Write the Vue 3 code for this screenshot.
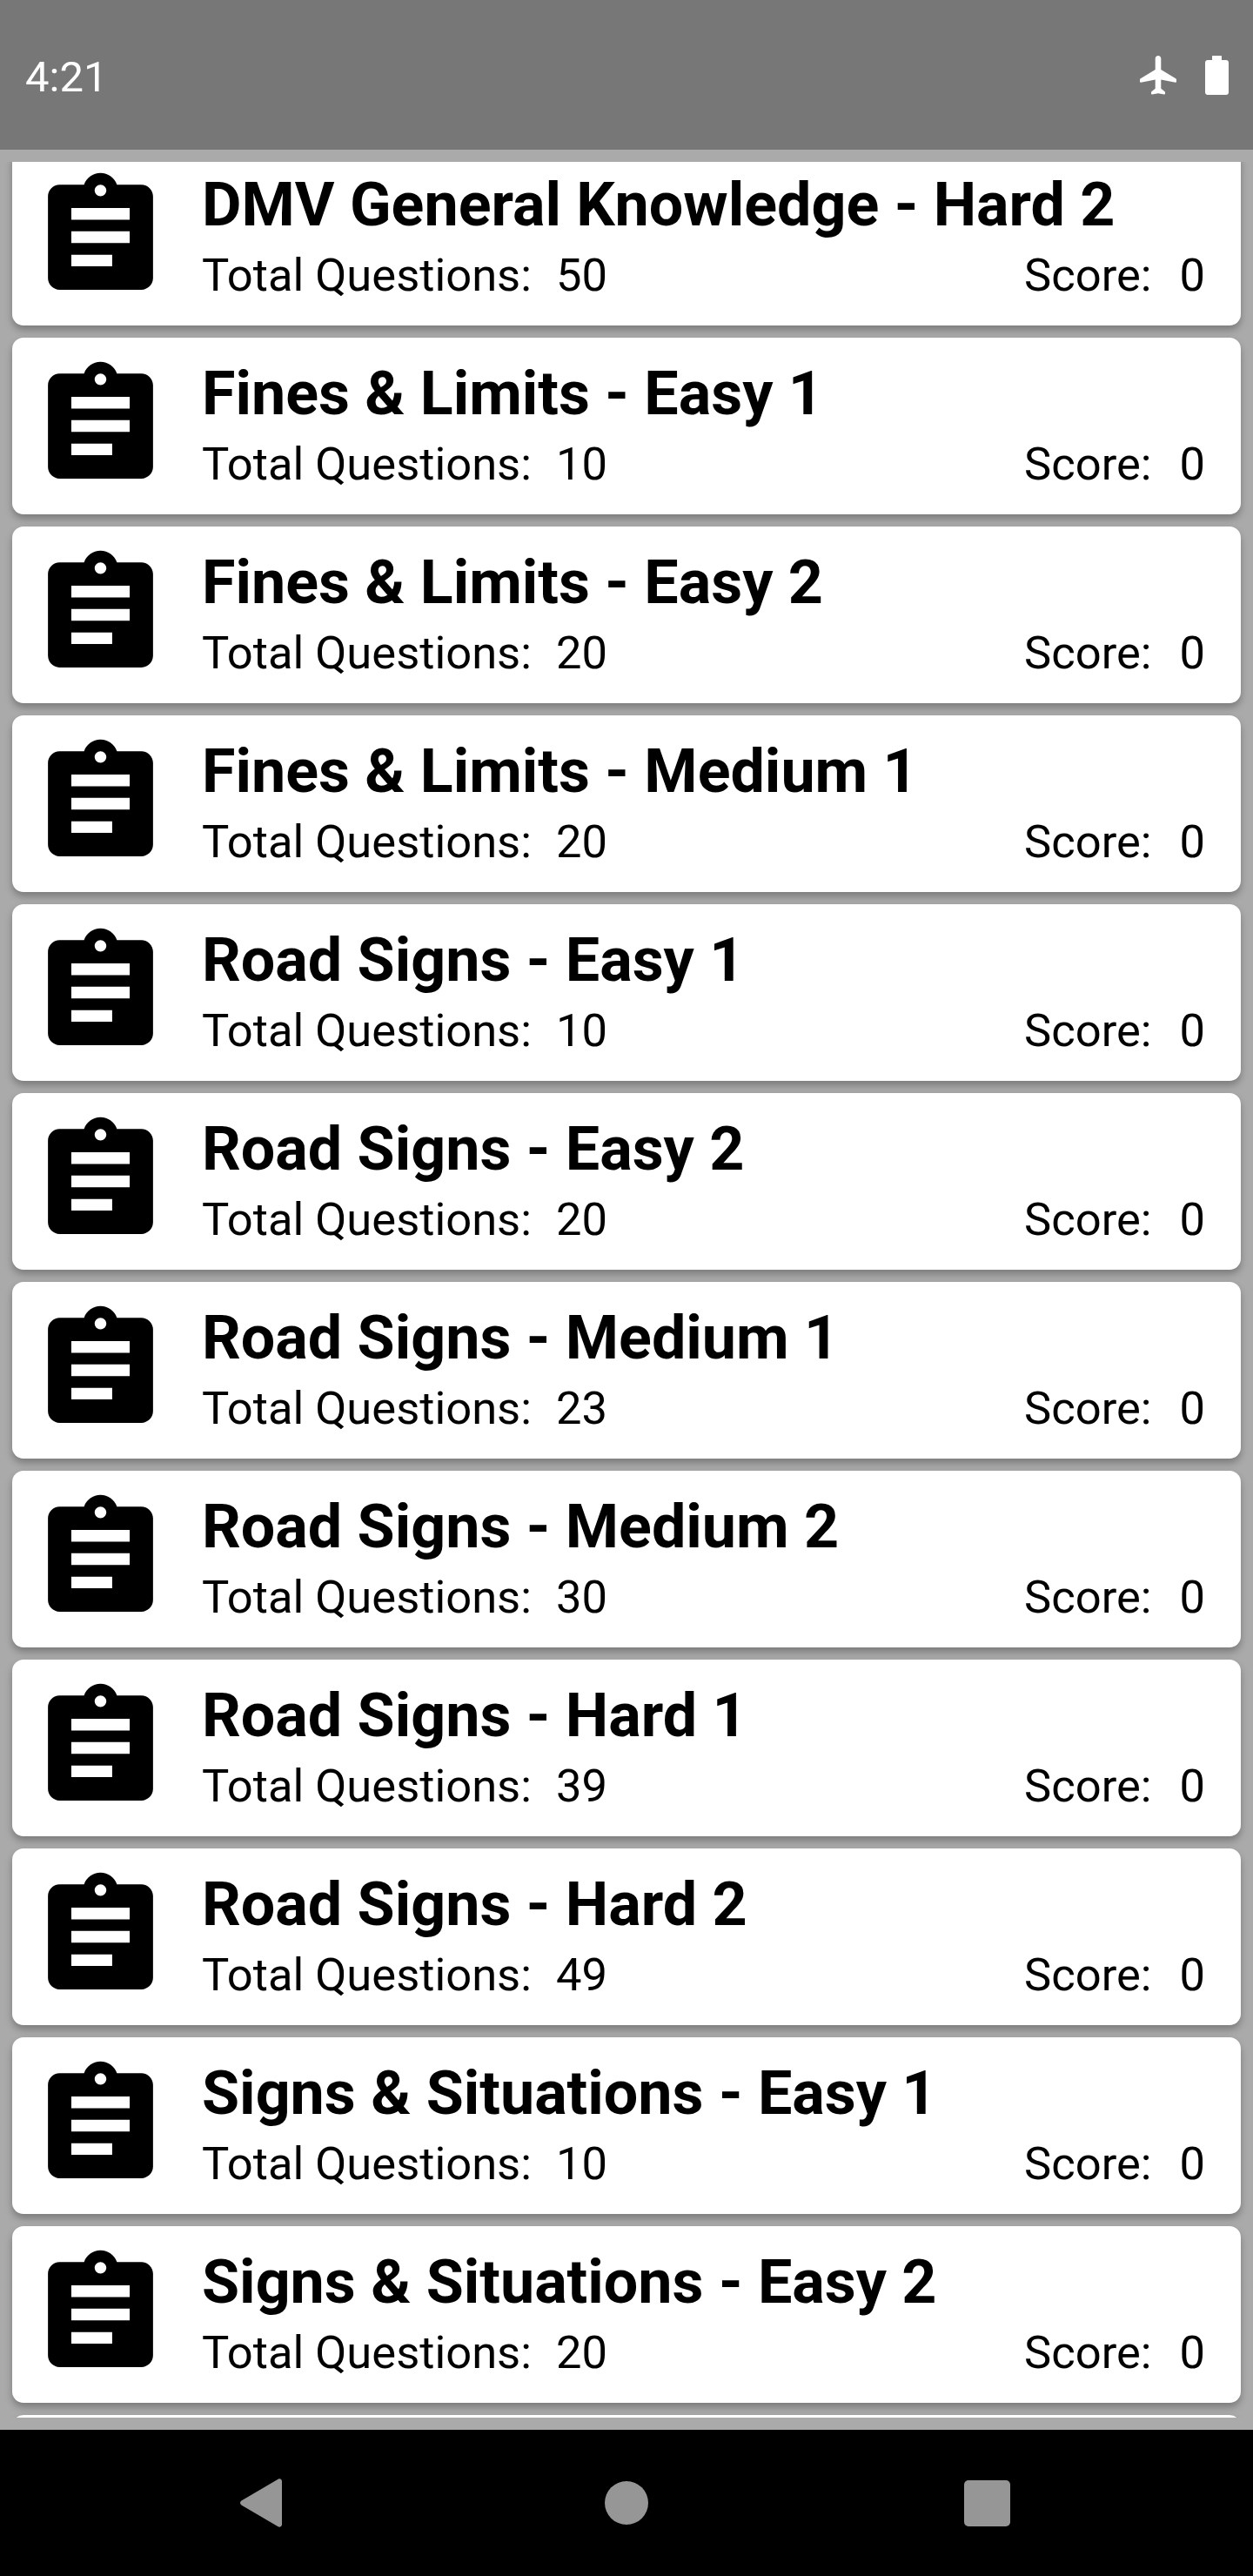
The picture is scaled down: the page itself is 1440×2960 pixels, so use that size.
<script setup>
const quizzes = [
  { title: 'DMV General Knowledge - Hard 2', total: 50, score: 0 },
  { title: 'Fines & Limits - Easy 1', total: 10, score: 0 },
  { title: 'Fines & Limits - Easy 2', total: 20, score: 0 },
  { title: 'Fines & Limits - Medium 1', total: 20, score: 0 },
  { title: 'Road Signs - Easy 1', total: 10, score: 0 },
  { title: 'Road Signs - Easy 2', total: 20, score: 0 },
  { title: 'Road Signs - Medium 1', total: 23, score: 0 },
  { title: 'Road Signs - Medium 2', total: 30, score: 0 },
  { title: 'Road Signs - Hard 1', total: 39, score: 0 },
  { title: 'Road Signs - Hard 2', total: 49, score: 0 },
  { title: 'Signs & Situations - Easy 1', total: 10, score: 0 },
  { title: 'Signs & Situations - Easy 2', total: 20, score: 0 },
]
</script>

<template>
  <div class="screen">
    <header class="status-bar">
      <span class="clock">4:21</span>
      <div class="status-icons">
        <svg class="plane" viewBox="0 0 42 45" aria-hidden="true">
          <path d="M21 0C19.100 0 17.700 1.500 17.700 3.400V16L.8 26.200C.3 26.500 0 27 0 27.600V29.800C0 30.500.6 30.900 1.200 30.700L17.700 27.400V37.800L13.700 41C13.300 41.300 13 41.800 13 42.300V43.800C13 44.400 13.500 44.700 14 44.600L21 43.200L28 44.600C28.500 44.700 29 44.400 29 43.800V42.300C29 41.800 28.700 41.300 28.300 41L24.300 37.800V27.400L40.800 30.700C41.400 30.900 42 30.500 42 29.800V27.600C42 27 41.700 26.500 41.200 26.200L24.300 16V3.400C24.300 1.500 22.900 0 21 0Z" />
        </svg>
        <svg class="battery" viewBox="0 0 27 45" aria-hidden="true">
          <path d="M9 0h9c.6 0 1 .4 1 1v4h5c1.700 0 3 1.300 3 3v34c0 1.700-1.300 3-3 3H3c-1.700 0-3-1.300-3-3V8c0-1.700 1.300-3 3-3h5V1c0-.6.4-1 1-1z" />
        </svg>
      </div>
    </header>

    <main class="list-viewport">
      <div class="list">
        <article v-for="quiz in quizzes" :key="quiz.title" class="quiz-card">
          <svg class="quiz-icon" viewBox="0 0 24 24" aria-hidden="true">
            <path d="M19 3h-4.180C14.400 1.840 13.300 1 12 1c-1.300 0-2.400.84-2.820 2H5c-1.100 0-2 .9-2 2v14c0 1.100.9 2 2 2h14c1.100 0 2-.9 2-2V5c0-1.100-.9-2-2-2zm-7 0c.55 0 1 .45 1 1s-.45 1-1 1-1-.45-1-1 .45-1 1-1zm2 14H7v-2h7v2zm3-4H7v-2h10v2zm0-4H7V7h10v2z" />
          </svg>
          <div class="quiz-body">
            <h2 class="quiz-title">{{ quiz.title }}</h2>
            <div class="quiz-meta">
              <span class="meta-item">
                <span>Total Questions:</span>
                <span>{{ quiz.total }}</span>
              </span>
              <span class="meta-item score">
                <span>Score:</span>
                <span>{{ quiz.score }}</span>
              </span>
            </div>
          </div>
        </article>
        <!-- next row, only its top edge is scrolled into view -->
        <div class="quiz-card" aria-hidden="true"></div>
      </div>
    </main>

    <nav class="nav-bar">
      <svg class="nav-back" viewBox="0 0 48 56" aria-hidden="true">
        <path d="M1.400 25.600L43.600.7C45.600-.5 48 .9 48 3.200V52.800C48 55.100 45.600 56.500 43.600 55.300L1.400 30.400C-.5 29.200-.5 26.800 1.400 25.600Z" />
      </svg>
      <span class="nav-home"></span>
      <span class="nav-recent"></span>
    </nav>
  </div>
</template>

<style scoped>
.screen {
  width: 1440px;
  height: 2960px;
  display: flex;
  flex-direction: column;
  overflow: hidden;
  background: #aaaaaa;
  font-family: Roboto, "Liberation Sans", sans-serif;
  color: #000;
}

.status-bar {
  flex: 0 0 172px;
  display: flex;
  align-items: center;
  justify-content: space-between;
  padding: 0 28px 0 29px;
  background: #777777;
  color: #fff;
}

.clock {
  font-size: 49px;
  line-height: 1;
  margin-top: 4px;
}

.status-icons {
  display: flex;
  align-items: center;
  gap: 33px;
  margin-top: 0;
}

.status-icons svg {
  display: block;
  fill: #fff;
}

.plane {
  width: 42px;
  height: 45px;
}

.battery {
  width: 27px;
  height: 45px;
}

.list-viewport {
  flex: 1;
  min-height: 0;
  margin: 14px 0;
  padding: 0 14px;
  overflow: hidden;
}

.list {
  margin-top: -15px;
  display: flex;
  flex-direction: column;
  gap: 14px;
}

.quiz-card {
  flex: 0 0 203px;
  box-sizing: border-box;
  display: flex;
  padding: 21px 21px 0;
  gap: 36px;
  border-radius: 13px;
  background: #fff;
  box-shadow: 0 5px 8px rgba(0, 0, 0, 0.28);
}

.quiz-icon {
  flex: 0 0 161px;
  width: 161px;
  height: 161px;
}

.quiz-body {
  flex: 1;
  min-width: 0;
  padding-top: 2px;
  padding-right: 20px;
}

.quiz-title {
  margin: 0;
  font-size: 70px;
  font-weight: 700;
  line-height: 82px;
}

.quiz-meta {
  margin-top: 10px;
  display: flex;
  justify-content: space-between;
  font-size: 52.5px;
  line-height: 61px;
}

.meta-item {
  display: flex;
  gap: 28px;
}

.meta-item.score {
  gap: 32px;
}

.nav-bar {
  flex: 0 0 168px;
  display: flex;
  align-items: center;
  padding-left: 276px;
  background: #000;
}

.nav-back {
  width: 48px;
  height: 56px;
  fill: #969696;
}

.nav-home {
  width: 50px;
  height: 50px;
  margin-left: 371px;
  border-radius: 50%;
  background: #969696;
}

.nav-recent {
  width: 53px;
  height: 53px;
  margin-left: 363px;
  border-radius: 5px;
  background: #969696;
}
</style>
